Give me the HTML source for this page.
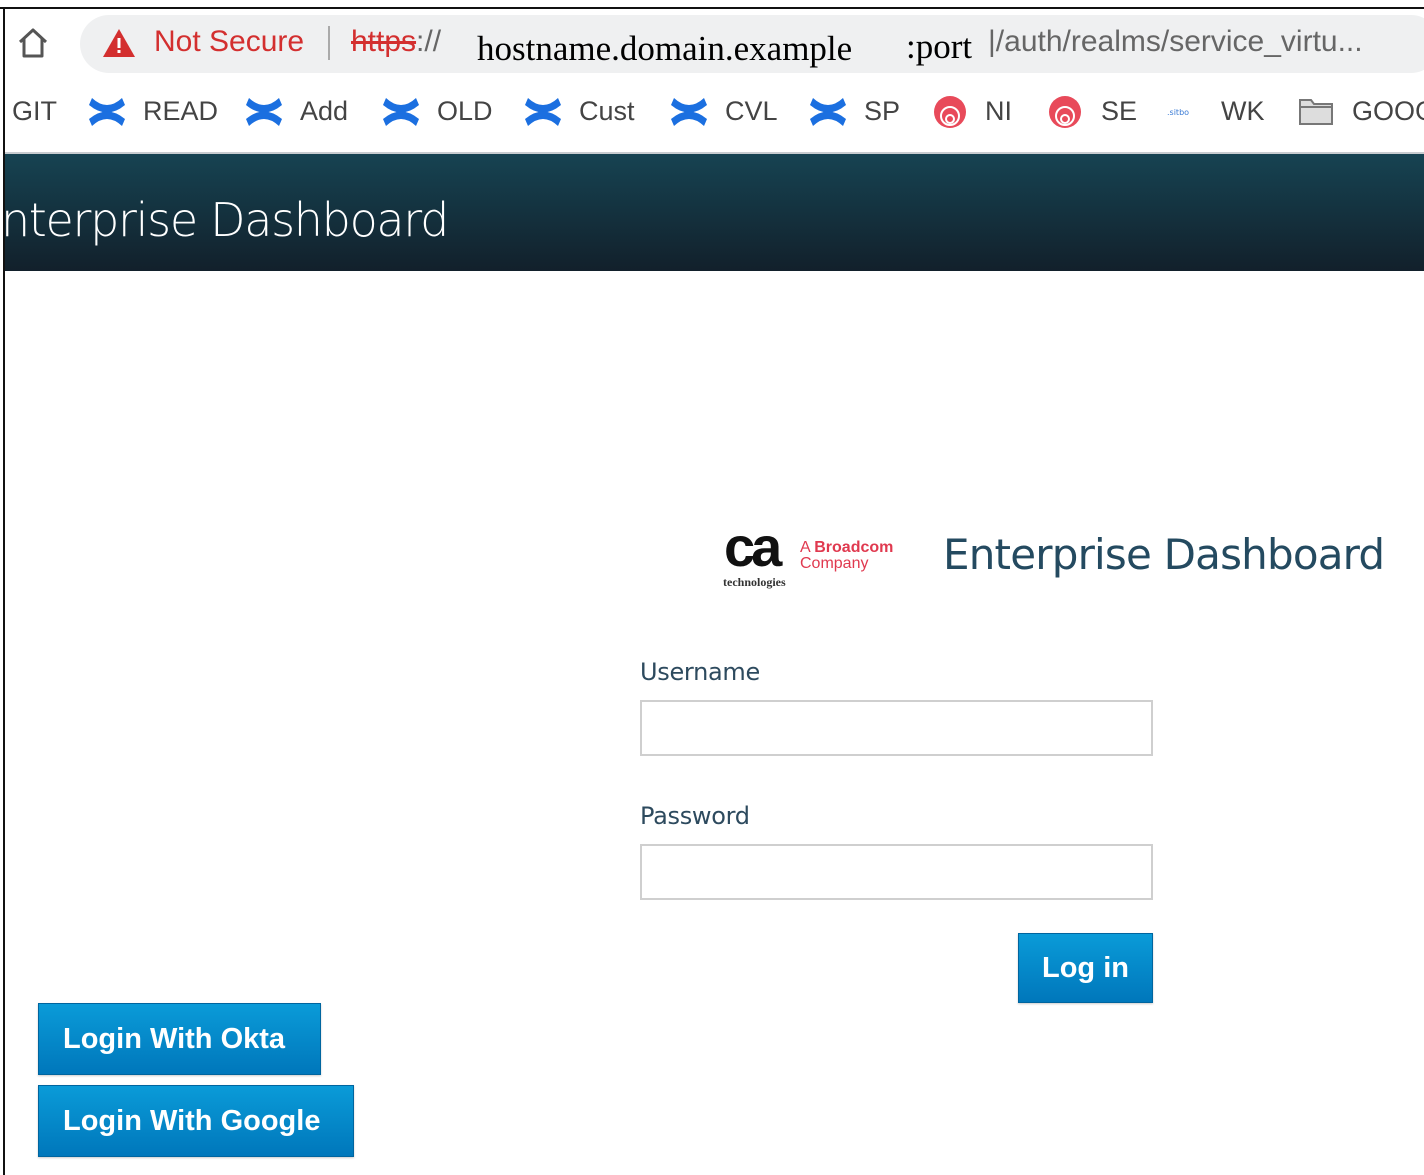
<!DOCTYPE html>
<html><head><meta charset="utf-8"><style>
*{margin:0;padding:0;box-sizing:border-box}
body{width:1424px;height:1175px;background:#fff;position:relative;overflow:hidden;font-family:"DejaVu Sans","Liberation Sans",sans-serif}
.a{position:absolute;white-space:nowrap}
.bm{position:absolute;top:96px;font-family:"Liberation Sans",sans-serif;font-size:27px;color:#444;line-height:30px}
.btn{position:absolute;background:linear-gradient(#0a9bd8,#0077bb);border:1px solid #00659f;color:#fff;font-family:"Liberation Sans",sans-serif;font-weight:bold;box-shadow:0 1px 2px rgba(0,0,0,.2);white-space:nowrap}
.inp{position:absolute;left:640px;width:513px;height:56px;border:2px solid #cfcfcf;background:#fff}
.lbl{position:absolute;left:640px;font-size:24px;color:#2d4a5e;letter-spacing:-0.3px}
</style></head><body>
<div class="a" style="left:0;top:7px;width:1424px;height:2px;background:#111"></div>
<div class="a" style="left:3px;top:7px;width:2px;height:1168px;background:#111"></div>
<svg class="a" style="left:16px;top:26px" width="34" height="34" viewBox="0 0 34 34"><path d="M4 16 L17 4 L30 16 M8 13 V30 H26 V13" fill="none" stroke="#555" stroke-width="3" stroke-linejoin="round"/></svg>
<div class="a" style="left:80px;top:15px;width:1360px;height:58px;border-radius:29px;background:#eff0f1"></div>
<svg class="a" style="left:102px;top:28px" width="34" height="30" viewBox="0 0 34 30"><path d="M17 1 L33 29 H1 Z" fill="#d32f2f"/><rect x="15.5" y="10" width="3" height="10" fill="#fff"/><rect x="15.5" y="22" width="3" height="3" fill="#fff"/></svg>
<div class="a" style="left:154px;top:25px;font-family:'Liberation Sans',sans-serif;font-size:30px;color:#d32f2f">Not Secure</div>
<div class="a" style="left:328px;top:26px;width:2px;height:34px;background:#aaa"></div>
<div class="a" style="left:351px;top:25px;font-family:'Liberation Sans',sans-serif;font-size:30px;color:#d32f2f"><span style="text-decoration:line-through">https</span><span style="color:#666">://</span></div>
<div class="a" style="left:477px;top:29px;font-family:'Liberation Serif',serif;font-size:35px;color:#000">hostname.domain.example</div>
<div class="a" style="left:906px;top:27px;font-family:'Liberation Serif',serif;font-size:35px;color:#000">:port</div>
<div class="a" style="left:988px;top:25px;font-family:'Liberation Sans',sans-serif;font-size:30px;color:#666">|/auth/realms/service_virtu...</div>
<div class="bm" style="left:12px">GIT</div>
<svg width="0" height="0" style="position:absolute"><defs><g id="cf"><path d="M3 6 Q18 20 33 6 L36 13 Q18 28 0 13 Z" fill="#1b6fe0"/><path d="M3 34 Q18 20 33 34 L36 27 Q18 12 0 27 Z" fill="#1b6fe0"/></g></defs></svg>
<svg class="a" style="left:89px;top:92px" width="36" height="40"><use href="#cf"/></svg><div class="bm" style="left:143px">READ</div>
<svg class="a" style="left:246px;top:92px" width="36" height="40"><use href="#cf"/></svg><div class="bm" style="left:300px">Add</div>
<svg class="a" style="left:383px;top:92px" width="36" height="40"><use href="#cf"/></svg><div class="bm" style="left:437px">OLD</div>
<svg class="a" style="left:525px;top:92px" width="36" height="40"><use href="#cf"/></svg><div class="bm" style="left:579px">Cust</div>
<svg class="a" style="left:671px;top:92px" width="36" height="40"><use href="#cf"/></svg><div class="bm" style="left:725px">CVL</div>
<svg class="a" style="left:810px;top:92px" width="36" height="40"><use href="#cf"/></svg><div class="bm" style="left:864px">SP</div>
<svg class="a" style="left:932px;top:94px" width="36" height="36"><circle cx="18" cy="18" r="16" fill="#e84a5a"/><circle cx="18" cy="22" r="9" fill="none" stroke="#fff" stroke-width="2"/><circle cx="18" cy="25" r="4" fill="none" stroke="#fff" stroke-width="2"/></svg><div class="bm" style="left:985px">NI</div>
<svg class="a" style="left:1047px;top:94px" width="36" height="36"><circle cx="18" cy="18" r="16" fill="#e84a5a"/><circle cx="18" cy="22" r="9" fill="none" stroke="#fff" stroke-width="2"/><circle cx="18" cy="25" r="4" fill="none" stroke="#fff" stroke-width="2"/></svg><div class="bm" style="left:1101px">SE</div>
<div class="a" style="left:1167px;top:108px;font-size:8px;color:#3a7bd5">.sitbo</div><div class="bm" style="left:1221px">WK</div>
<svg class="a" style="left:1298px;top:96px" width="36" height="30"><path d="M2 4 H13 L16 8 H34 V28 H2 Z" fill="#ddd" stroke="#777" stroke-width="2"/><path d="M2 11 H34" stroke="#777" stroke-width="2"/></svg><div class="bm" style="left:1352px">GOOG</div>
<div class="a" style="left:5px;top:152px;width:1419px;height:119px;background:linear-gradient(#164352,#12202b);border-top:2px solid #c8ccd0"></div>
<div class="a" style="left:5px;top:152px;width:443px;height:119px;overflow:hidden"><div class="a" style="right:0;top:41px;font-size:46px;color:#fff;font-weight:300;letter-spacing:-1.3px">Enterprise Dashboard</div></div>
<div class="a" style="left:724px;top:517px;font-family:'Liberation Sans',sans-serif;font-weight:bold;font-size:56px;letter-spacing:-4px;color:#111;line-height:60px">ca</div>
<div class="a" style="left:723px;top:575px;font-family:'Liberation Serif',serif;font-size:12px;color:#333;font-weight:bold">technologies</div>
<div class="a" style="left:800px;top:540px;font-family:'Liberation Sans',sans-serif;font-size:16px;color:#e0394f;line-height:16px">A <b>Broadcom</b><br>Company</div>
<div class="a" style="left:943px;top:530px;font-size:42px;color:#244a60;letter-spacing:-0.8px">Enterprise Dashboard</div>
<div class="lbl" style="top:658px">Username</div>
<div class="inp" style="top:700px"></div>
<div class="lbl" style="top:802px">Password</div>
<div class="inp" style="top:844px"></div>
<div class="btn" style="left:1018px;top:933px;width:135px;height:70px;font-size:29px;line-height:68px;text-align:center">Log in</div>
<div class="btn" style="left:38px;top:1003px;width:283px;height:72px;font-size:29px;line-height:70px;padding-left:24px">Login With Okta</div>
<div class="btn" style="left:38px;top:1085px;width:316px;height:72px;font-size:29px;line-height:70px;padding-left:24px">Login With Google</div>
</body></html>
